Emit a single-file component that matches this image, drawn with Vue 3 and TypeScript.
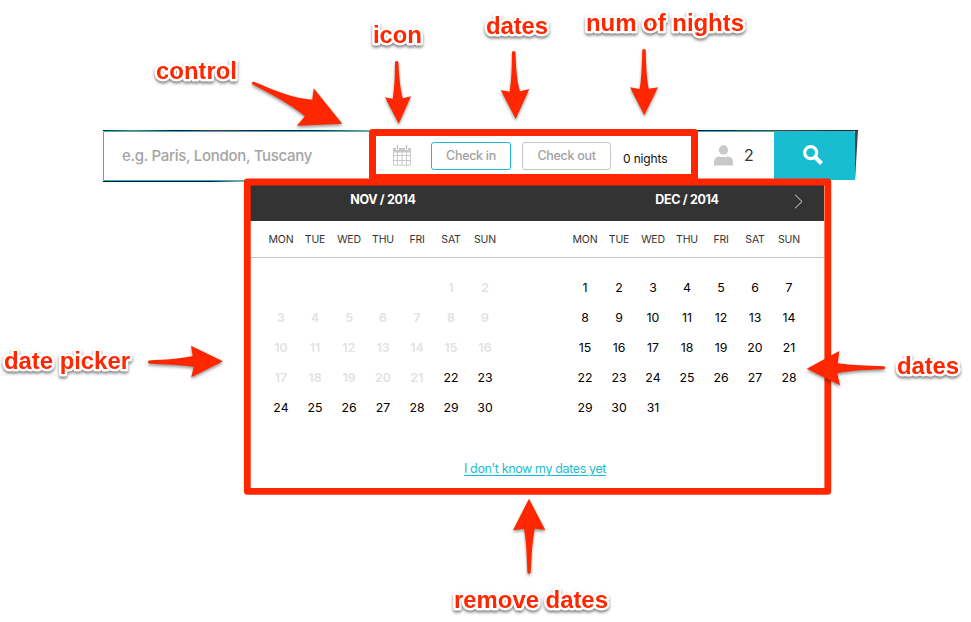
<script setup lang="ts">
interface Day { n: number; past: boolean }
interface Month { title: string; cells: (Day | null)[] }

const weekdays = ['MON', 'TUE', 'WED', 'THU', 'FRI', 'SAT', 'SUN']

function buildMonth(title: string, offset: number, count: number, firstFree: number): Month {
  const cells: (Day | null)[] = Array.from({ length: offset }, () => null)
  for (let n = 1; n <= count; n++) cells.push({ n, past: n < firstFree })
  return { title, cells }
}

const months: Month[] = [
  buildMonth('NOV / 2014', 5, 30, 22),
  buildMonth('DEC / 2014', 0, 31, 1),
]

const labels = [
  { text: 'control', x: 156, y: 79, w: 81 },
  { text: 'icon', x: 373, y: 43, w: 49 },
  { text: 'dates', x: 486, y: 34, w: 62 },
  { text: 'num of nights', x: 586, y: 31, w: 158 },
  { text: 'date picker', x: 4, y: 369, w: 126 },
  { text: 'dates', x: 897, y: 374, w: 62 },
  { text: 'remove dates', x: 454, y: 608, w: 154 },
]

const arrows = [
  'M251.8 84 Q251.6 81.6 254 81.8 C276 91 292 98 312.3 99.7 L313.7 88.3 L342.3 123.7 L296.7 125.7 L305 116.3 C289 103 272 95 251.8 84 Z',
  'M395 62 Q396.7 59.8 398.4 62 C399 76 400 88 402.7 98.3 L411 96.3 L398.7 123.7 L385 97.3 L392.7 98.7 C394.5 88 395 76 395 62 Z',
  'M512 52 Q513.7 49.8 515.4 52 C516 66 516.5 80 520 91.3 L529.3 89 L515.7 119 L500.7 90 L509.7 91.7 C511.5 80 512 66 512 52 Z',
  'M642.3 50 Q644 47.8 645.7 50 C646 64 646.5 78 648.7 88.7 L658 87.3 L644.3 115.3 L630 87.3 L639.7 89 C641.5 78 642 64 642.3 50 Z',
  'M149 363.5 Q146.8 361.9 149 360.4 C165 359.5 179 359 192.7 356 L191 345.7 L223 361.3 L191.3 377.3 L193.7 366.7 C180 365 165 364.5 149 363.5 Z',
  'M884 366.2 Q886.5 367.6 884 369.2 C868 370 852 370 837.3 373.3 L840 385.3 L806.7 368.7 L839.3 351 L837.7 363.3 C852 365.5 868 365.7 884 366.2 Z',
  'M530.7 572.5 Q529 575 527.4 572.5 C526.7 557 526.5 542 524 528.7 L513 530.3 L529 498.7 L545.3 530 L534.7 528.7 C532 542 531.5 557 530.7 572.5 Z',
]
</script>

<template>
  <main class="page">
    <section class="search">
      <div class="field where"><span>e.g. Paris, London, Tuscany</span></div>
      <div class="field stay">
        <svg class="cal" width="18" height="21" viewBox="0 0 18 21">
          <path d="M.5 3.5h17v16.700h-17z M.5 10.500h17 M.5 15.500h17 M4.500 7v13 M9 7v13 M13.500 7v13" fill="none" stroke="#c9c9c9" />
          <path d="M0 3h18v4.500h-18z" fill="#c9c9c9" />
          <path d="M4.500 0v5 M13.500 0v5" stroke="#fff" stroke-width="3" />
          <path d="M4.500 0v4.500 M13.500 0v4.500" stroke="#c0c0c0" stroke-width="1.300" />
        </svg>
        <button class="date active">Check in</button>
        <button class="date">Check out</button>
        <span class="nights">0 nights</span>
      </div>
      <div class="field guests">
        <svg width="19" height="21" viewBox="0 0 19 21" fill="#c9c9c9">
          <circle cx="9.500" cy="5" r="4.700" />
          <path d="M0 20.500v-3.500q0-5 5-5.500 4.500 1.200 9 0 5 .5 5 5.500v3.500z" />
        </svg>
        <span>2</span>
      </div>
      <button class="go" aria-label="Search">
        <svg width="20" height="20" viewBox="0 0 20 20" fill="none" stroke="#fff">
          <circle cx="7.700" cy="7.700" r="6" stroke-width="3.200" />
          <path d="M12 12l6.500 6.500" stroke-width="4.200" />
        </svg>
      </button>
      <i class="edge"></i>
    </section>

    <section class="picker">
      <header class="titles">
        <h2 v-for="m in months" :key="m.title">{{ m.title }}</h2>
        <svg class="next" width="9" height="15" viewBox="0 0 9 15" fill="none" stroke="#ddd">
          <path d="M1 .7l7 6.800-7 6.800" />
        </svg>
      </header>
      <div class="weekdays">
        <div v-for="m in months" :key="m.title" class="row">
          <span v-for="w in weekdays" :key="w">{{ w }}</span>
        </div>
      </div>
      <div class="days">
        <div v-for="m in months" :key="m.title" class="row">
          <span v-for="(c, i) in m.cells" :key="i" :class="{ past: c?.past }">{{ c?.n }}</span>
        </div>
      </div>
      <a class="unknown">I don't know my dates yet</a>
    </section>

    <svg class="notes" width="971" height="622" viewBox="0 0 971 622">
      <g fill="none" stroke="#ff2600" stroke-linejoin="round">
        <rect x="372.500" y="132.500" width="322" height="45" stroke-width="7" />
        <rect x="247.300" y="182" width="580.500" height="309.300" stroke-width="6.800" />
      </g>
      <g class="arrows"><path v-for="d in arrows" :key="d" :d="d" /></g>
      <g class="labels">
        <text v-for="l in labels" :key="l.x" :x="l.x" :y="l.y" :textLength="l.w">{{ l.text }}</text>
      </g>
    </svg>
  </main>
</template>

<style>
body { margin: 0; background: #fff; overflow: hidden; }
</style>

<style scoped>
* { box-sizing: border-box; }
.page { position: relative; width: 971px; height: 622px; padding-top: 130px; overflow: hidden; background: #fff; font-family: Inter, "Liberation Sans", sans-serif; }
.search { display: flex; width: 755px; height: 52px; margin-left: 103px; padding-top: 1px; background: linear-gradient(90deg, #222, #87764c 4%, #211 10%, #902030 14%, #501018 22%, #222 28%, #bba66d 36%, #222 45%, #111 78%, #643 88%, #222) top / 100% 1px no-repeat, linear-gradient(90deg, #111 12%, #111 40%, #c5a27d 52%, #222 62%) left bottom / 267px 1px no-repeat; }
.field { display: flex; align-items: center; height: 50px; padding-bottom: 2px; background: #fff; border-top: 1px solid #19bdd1; }
.where { width: 267px; padding-left: 18px; border: 1px solid #19bdd1; border-right: 0; border-radius: 2px 0 0 2px; color: #a4a4a4; font-size: 15px; font-weight: 500; letter-spacing: -.3px; }
.stay { width: 328px; padding-left: 23px; }
.cal { margin-right: 20px; }
.date { display: flex; align-items: center; justify-content: center; width: 80px; height: 28px; margin: 0 11px 0 0; padding: 0 0 1px; border: 1px solid #c6c6c6; border-radius: 3px; background: #fff; font-family: inherit; font-size: 12.500px; font-weight: 500; letter-spacing: -.3px; color: #a2a2a2; }
.date.active { border-color: #19bdd1; }
.date + .date { width: 89px; margin-right: 12px; }
.nights { padding-top: 5px; font-size: 12px; letter-spacing: -.15px; color: #111; white-space: nowrap; }
.guests { width: 76px; gap: 11px; padding-left: 16px; color: #333; font-size: 16px; }
.guests span { padding-bottom: 2px; }
.go { display: flex; align-items: center; justify-content: center; width: 81px; height: 49px; padding: 0 3px 1px 0; border: 0; border-radius: 0 2px 0 0; background: #19bdd1; }
.edge { width: 3px; height: 50px; background: #4c4444; clip-path: polygon(0 0, 100% 0, 0 100%); }
.picker { width: 574px; height: 306px; margin: 3px 0 0 250px; background: #fff; }
.titles { display: flex; gap: 66px; height: 36px; padding: 0 8px 0 14px; background: #333; }
.titles h2 { width: 238px; margin: 0; color: #fff; font-size: 12.500px; line-height: 29px; font-weight: 700; letter-spacing: -.35px; text-align: center; }
.next { flex: none; margin: 9px 0 0 -78px; }
.weekdays, .days { display: flex; gap: 66px; padding: 0 14px; }
.row { display: grid; grid-template-columns: repeat(7, 34px); align-content: start; text-align: center; }
.weekdays { height: 37px; border-bottom: 1px solid #c9c9c9; color: #333; font-size: 10.500px; line-height: 37px; letter-spacing: -.2px; }
.days { height: 201px; padding-top: 15px; color: #000; font-size: 12.300px; line-height: 30px; }
.days span { height: 30px; }
.days .past { color: #e2e2e2; font-weight: 600; }
.unknown { display: block; width: max-content; margin-left: 214px; color: #19bdd1; font-size: 12.500px; line-height: 20px; letter-spacing: -.38px; text-decoration: underline; text-underline-offset: 2px; }
.notes { position: absolute; left: 0; top: 0; }
.arrows { fill: #ff2600; filter: drop-shadow(0 2px 1.500px rgba(0, 0, 0, .4)); }
.labels { font: 700 24px "Liberation Sans", sans-serif; fill: #ff2600; stroke: #fff; stroke-width: 5px; stroke-linejoin: round; paint-order: stroke; filter: drop-shadow(0 2px 1.500px rgba(0, 0, 0, .5)); }
</style>
